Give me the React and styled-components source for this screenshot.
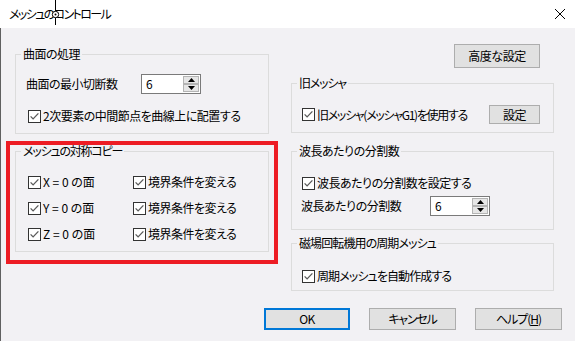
import React from 'react';
import styled, { createGlobalStyle } from 'styled-components';

const Global = createGlobalStyle`
  html, body { margin: 0; padding: 0; background: #f2f1f4; }
  body {
    font-family: "Noto Sans CJK JP", "Noto Sans", sans-serif;
    font-size: 12px;
    color: #000;
  }
  * { box-sizing: border-box; }
`;

const BG = '#f2f1f4';

const Window = styled.div`
  position: relative;
  width: 575px;
  height: 341px;
  overflow: hidden;
  background: ${BG};
  display: flex;
  flex-direction: column;
  font-feature-settings: "palt";
  letter-spacing: -0.5px;
`;

const TitleBar = styled.div`
  flex: none;
  height: 28px;
  background: #fff;
  display: flex;
  align-items: center;
  justify-content: space-between;
  padding: 0 10px 0 9px;
  line-height: 16px;
`;

const Tight = styled.span`
  letter-spacing: ${(p) => p.$ls}px;
`;

const Body = styled.div`
  flex: 1;
  display: flex;
  flex-direction: column;
  box-shadow: inset 1px 0 0 #606060;
`;

const Main = styled.div`
  display: grid;
  grid-template-columns: 254px 263px;
  column-gap: 22px;
  align-items: start;
  padding: 16px 0 0 15px;
`;

const Column = styled.div`
  display: flex;
  flex-direction: column;
  padding-top: ${(p) => p.$top || 0}px;
`;

const Group = styled.div`
  position: relative;
  border: 1px solid #dcdcdc;
  margin-top: ${(p) => p.$mt || 0}px;
  padding: ${(p) => p.$pad};
  display: flex;
  flex-direction: column;
  gap: ${(p) => p.$gap || 0}px;
`;

const Legend = styled.span`
  position: absolute;
  top: -9px;
  left: 5px;
  padding: 0 2px;
  background: ${BG};
  line-height: 16px;
  white-space: nowrap;
`;

const CheckRow = styled.label`
  display: flex;
  align-items: center;
  gap: 2px;
  height: 16px;
  line-height: 16px;
  white-space: nowrap;
`;

const CheckBox = styled.svg`
  flex: none;
  width: 13px;
  height: 13px;
`;

const Check = () => (
  <CheckBox viewBox="0 0 13 13">
    <rect x="0.5" y="0.5" width="12" height="12" fill="#fff" stroke="#333" />
    <path d="M2.6 6.4 L5.1 8.9 L10.4 3.4" fill="none" stroke="#5a5a5a" strokeWidth="1.3" />
  </CheckBox>
);

const SpinRow = styled.div`
  display: flex;
  align-items: center;
  height: 20px;
  margin-left: ${(p) => p.$shift || 0}px;
`;

const SpinLabel = styled.span`
  width: ${(p) => p.$w}px;
  flex: none;
  line-height: 16px;
  white-space: nowrap;
`;

const Spin = styled.div`
  display: flex;
  width: 60px;
  height: 20px;
  border: 1px solid #7a7a7a;
  background: #fff;
`;

const SpinValue = styled.span`
  flex: 1;
  padding-left: 4px;
  line-height: 18px;
`;

const SpinButtons = styled.div`
  width: 17px;
  display: flex;
  flex-direction: column;
  padding: 1px 1px 1px 0;
`;

const SpinBtn = styled.div`
  flex: 1;
  background: #e6e6e6;
  border: 1px solid #b4b4b4;
  display: flex;
  align-items: center;
  justify-content: center;
`;

const Arrow = styled.svg`
  width: 7px;
  height: 4px;
`;

const Spinner = ({ value }) => (
  <Spin>
    <SpinValue>{value}</SpinValue>
    <SpinButtons>
      <SpinBtn>
        <Arrow viewBox="0 0 7 4"><path d="M0 4 L3.5 0 L7 4 Z" fill="#000" /></Arrow>
      </SpinBtn>
      <SpinBtn>
        <Arrow viewBox="0 0 7 4"><path d="M0 0 L3.5 4 L7 0 Z" fill="#000" /></Arrow>
      </SpinBtn>
    </SpinButtons>
  </Spin>
);

const Button = styled.div`
  width: ${(p) => p.$w}px;
  height: ${(p) => p.$h}px;
  flex: none;
  background: #e1e1e1;
  border: ${(p) => (p.$default ? '2px solid #0078d7' : '1px solid #adadad')};
  display: flex;
  align-items: center;
  justify-content: center;
  line-height: 16px;
  white-space: nowrap;
  align-self: ${(p) => p.$align || 'auto'};
  margin-right: ${(p) => p.$mr || 0}px;
  margin-left: ${(p) => (p.$push ? 'auto' : '0')};
`;

const SymGrid = styled.div`
  display: grid;
  grid-template-columns: 105px auto;
  grid-auto-rows: 26px;
  align-items: center;
`;

const InlineRow = styled.div`
  display: flex;
  align-items: center;
  height: 19px;
  padding-right: 13px;
`;

const Footer = styled.div`
  margin-top: auto;
  display: flex;
  justify-content: flex-end;
  gap: 19px;
  padding: 0 13px 11px 0;
`;

const Underline = styled.span`
  text-decoration: underline;
`;

const CloseIcon = styled.svg`
  width: 10px;
  height: 10px;
`;

const Annotation = styled.div`
  position: absolute;
  left: 6px;
  top: 141px;
  width: 272px;
  height: 123px;
  border: 4px solid #ed1c24;
  pointer-events: none;
`;

const Cursor = styled.svg`
  position: absolute;
  left: 49px;
  top: 0;
  width: 13px;
  height: 26px;
`;

export default function App() {
  return (
    <>
      <Global />
      <Window>
        <TitleBar>
          <Tight $ls={-1.6}>メッシュのコントロール</Tight>
          <CloseIcon viewBox="0 0 10 10">
            <path d="M0 0 L10 10 M10 0 L0 10" stroke="#000" strokeWidth="1" />
          </CloseIcon>
        </TitleBar>
        <Body>
          <Main>
            <Column $top={10}>
              <Group $pad="19px 0 9px 12px" $gap={14}>
                <Legend>曲面の処理</Legend>
                <SpinRow $shift={-2}>
                  <SpinLabel $w={115}>曲面の最小切断数</SpinLabel>
                  <Spinner value="6" />
                </SpinRow>
                <CheckRow>
                  <Check />2次要素の中間節点を曲線上に配置する
                </CheckRow>
              </Group>
              <Group $mt={17} $pad="17px 0 4px 12px">
                <Legend><Tight $ls={-1.2}>メッシュの対称コピー</Tight></Legend>
                <SymGrid>
                  {['X', 'Y', 'Z'].map((a) => (
                    <React.Fragment key={a}>
                      <CheckRow><Check /><Tight $ls={0}>{a} = 0 の面</Tight></CheckRow>
                      <CheckRow><Check />境界条件を変える</CheckRow>
                    </React.Fragment>
                  ))}
                </SymGrid>
              </Group>
            </Column>
            <Column>
              <Button $w={86} $h={24} $align="flex-end" $mr={14}>高度な設定</Button>
              <Group $mt={15} $pad="21px 0 8px 10px">
                <Legend><Tight $ls={-1.2}>旧メッシャ</Tight></Legend>
                <InlineRow>
                  <CheckRow><Check /><Tight $ls={-1.3}>旧メッシャ(メッシャG1)を使用する</Tight></CheckRow>
                  <Button $w={51} $h={19} $push>設定</Button>
                </InlineRow>
              </Group>
              <Group $mt={18} $pad="23px 0 13px 10px" $gap={5}>
                <Legend>波長あたりの分割数</Legend>
                <CheckRow><Check />波長あたりの分割数を設定する</CheckRow>
                <SpinRow $shift={-1}>
                  <SpinLabel $w={129}>波長あたりの分割数</SpinLabel>
                  <Spinner value="6" />
                </SpinRow>
              </Group>
              <Group $mt={13} $pad="24px 0 6px 10px">
                <Legend><Tight $ls={-0.9}>磁場回転機用の周期メッシュ</Tight></Legend>
                <CheckRow><Check /><Tight $ls={-0.9}>周期メッシュを自動作成する</Tight></CheckRow>
              </Group>
            </Column>
          </Main>
          <Footer>
            <Button $w={86} $h={22} $default>OK</Button>
            <Button $w={87} $h={22}><Tight $ls={-1.2}>キャンセル</Tight></Button>
            <Button $w={87} $h={22}><Tight $ls={-1}>ヘルプ(<Underline>H</Underline>)</Tight></Button>
          </Footer>
        </Body>
        <Annotation />
        <Cursor viewBox="0 0 13 26">
          <path d="M6.5 0 L6.5 25" stroke="#000" strokeWidth="1" />
          <circle cx="6.5" cy="14.5" r="3.2" fill="#fff" stroke="#000" strokeWidth="1" />
          <circle cx="6.5" cy="14.5" r="1" fill="#000" />
        </Cursor>
      </Window>
    </>
  );
}
